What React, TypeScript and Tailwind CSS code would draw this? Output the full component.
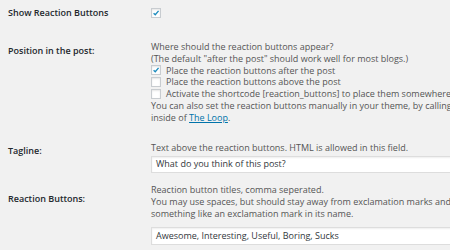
import React from "react";

function Check({ checked = false }: { checked?: boolean }) {
	return (
		<span className="inline-flex items-center justify-center w-[10px] h-[10px] shrink-0 bg-white border border-[#c8ccd0] shadow-[inset_0_1px_2px_rgba(0,0,0,0.1)]">
			{checked && (
				<svg viewBox="0 0 10 10" className="w-[8px] h-[8px]">
					<path d="M2 5.2 L4.1 7.2 L8.2 2.4" fill="none" stroke="#1e8cbe" strokeWidth="1.7" />
				</svg>
			)}
		</span>
	);
}

function Label({ children, top }: { children: React.ReactNode; top: string }) {
	return <div className={`${top} pl-2 w-[151px] shrink-0 font-semibold text-[#23282d]`}>{children}</div>;
}

export default function App() {
	return (
		<div
			className="w-[450px] h-[250px] overflow-hidden bg-[#f1f1f1] text-[9px] leading-[11.8px] text-[#555]"
			style={{ fontFamily: '"Open Sans", sans-serif' }}
		>
			{/* Show Reaction Buttons */}
			<div className="flex h-[41px]">
				<Label top="pt-[7px]">Show Reaction Buttons</Label>
				<div className="pt-[8px]">
					<Check checked />
				</div>
			</div>

			{/* Position */}
			<div className="flex h-[101px]">
				<Label top="pt-[4px]">Position in the post:</Label>
				<div className="whitespace-nowrap">
					<div>Where should the reaction buttons appear?</div>
					<div>(The default "after the post" should work well for most blogs.)</div>
					<div className="flex items-center gap-[5px]">
						<Check checked />
						<span>Place the reaction buttons after the post</span>
					</div>
					<div className="flex items-center gap-[5px]">
						<Check />
						<span>Place the reaction buttons above the post</span>
					</div>
					<div className="flex items-center gap-[5px]">
						<Check />
						<span>Activate the shortcode [reaction_buttons] to place them somewhere in your template</span>
					</div>
					<div>You can also set the reaction buttons manually in your theme, by calling the function</div>
					<div>
						inside of <span className="text-[#0073aa] underline">The Loop</span>.
					</div>
				</div>
			</div>

			{/* Tagline */}
			<div className="flex h-[42px]">
				<Label top="pt-[3px]">Tagline:</Label>
				<div className="flex-1 min-w-0 whitespace-nowrap">
					<div>Text above the reaction buttons. HTML is allowed in this field.</div>
					<div className="mt-[2px] h-[17px] -mr-4 bg-white border border-[#ddd] shadow-[inset_0_1px_2px_rgba(0,0,0,0.07)] px-[4px] flex items-center text-[#32373c]">
						What do you think of this post?
					</div>
				</div>
			</div>

			{/* Reaction Buttons */}
			<div className="flex">
				<Label top="pt-[9px]">Reaction Buttons:</Label>
				<div className="flex-1 min-w-0 whitespace-nowrap">
					<div>Reaction button titles, comma seperated.</div>
					<div>You may use spaces, but should stay away from exclamation marks and commas and</div>
					<div>something like an exclamation mark in its name.</div>
					<div className="mt-[8px] h-[18px] -mr-4 bg-white border border-[#ddd] shadow-[inset_0_1px_2px_rgba(0,0,0,0.07)] px-[4px] flex items-center text-[#32373c]">
						Awesome, Interesting, Useful, Boring, Sucks
					</div>
				</div>
			</div>
		</div>
	);
}
